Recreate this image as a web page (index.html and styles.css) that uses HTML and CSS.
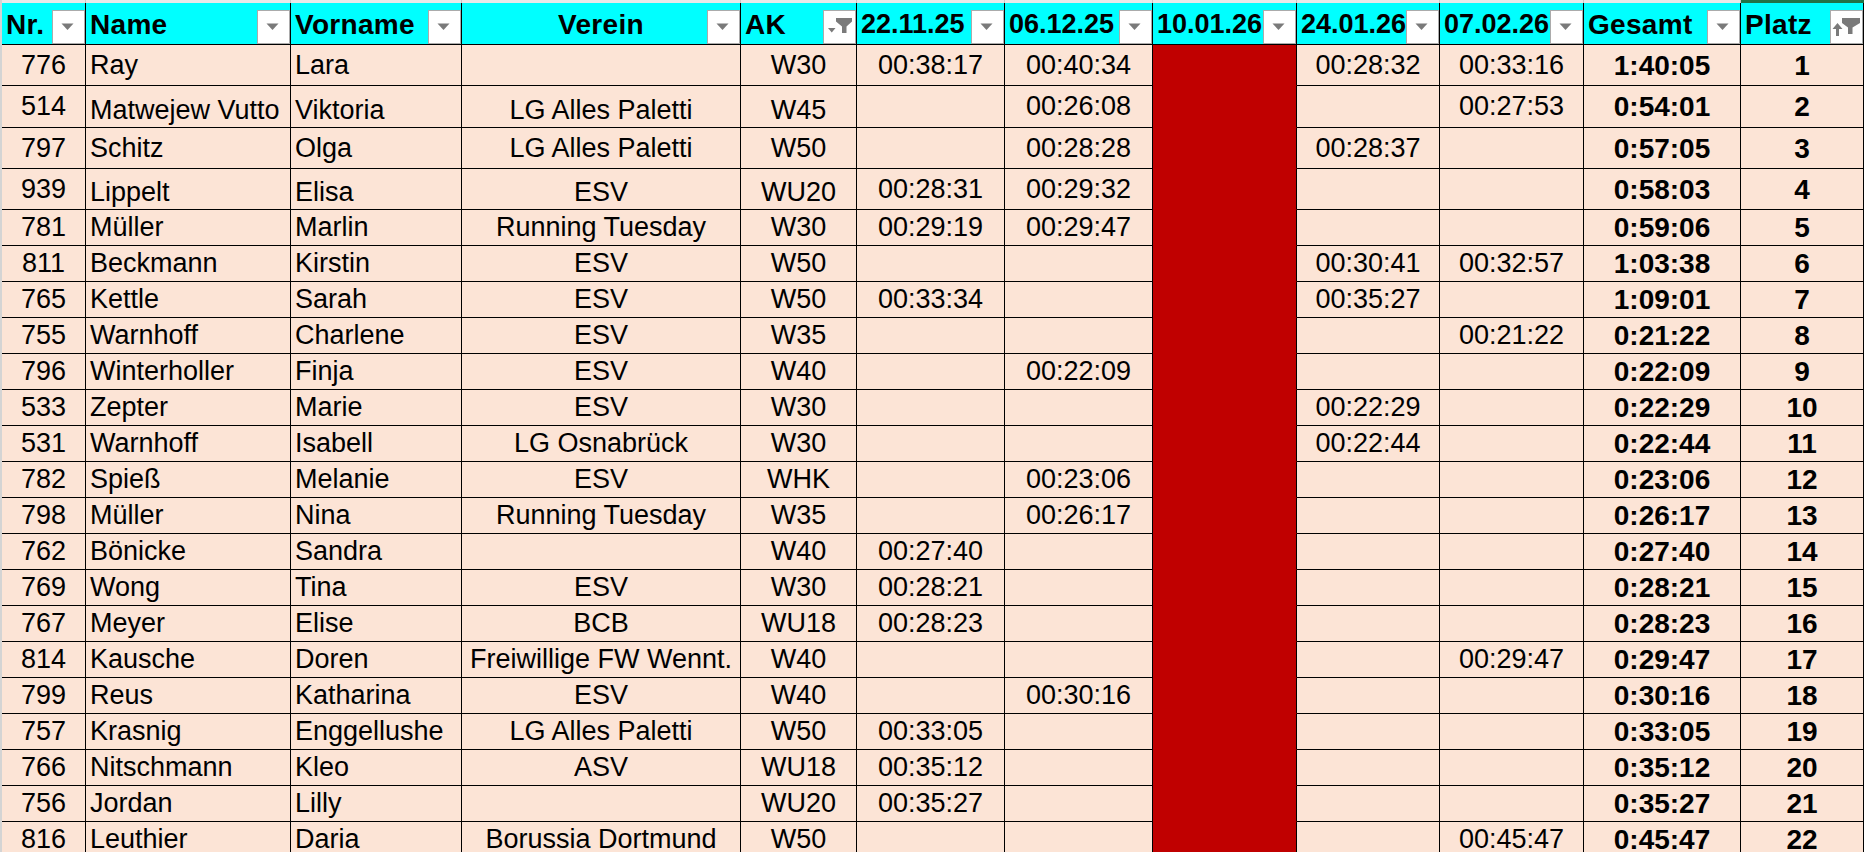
FILE: index.html
```html
<!DOCTYPE html>
<html lang="de">
<head>
<meta charset="utf-8">
<title>Ergebnisliste</title>
<link rel="stylesheet" href="styles.css">
</head>
<body>
<div class="sheet">
  <div class="row strip">
    <div class="sc"></div><div class="sc"></div><div class="sc"></div><div class="sc"></div><div class="sc"></div><div class="sc"></div><div class="sc"></div><div class="sc"></div><div class="sc"></div><div class="sc"></div><div class="sc"></div><div class="sc sel"></div>
  </div>
  <div class="row head">
    <div class="hd wide">Nr.<span class="fb"><svg viewBox="0 0 31 32"><polygon class="ic" points="8.5,12.5 20.5,12.5 14.5,19"/></svg></span></div>
    <div class="hd wide">Name<span class="fb"><svg viewBox="0 0 31 32"><polygon class="ic" points="8.5,12.5 20.5,12.5 14.5,19"/></svg></span></div>
    <div class="hd wide">Vorname<span class="fb"><svg viewBox="0 0 31 32"><polygon class="ic" points="8.5,12.5 20.5,12.5 14.5,19"/></svg></span></div>
    <div class="hd wide mid">Verein<span class="fb"><svg viewBox="0 0 31 32"><polygon class="ic" points="8.5,12.5 20.5,12.5 14.5,19"/></svg></span></div>
    <div class="hd wide">AK<span class="fb"><svg viewBox="0 0 31 32"><polygon class="ic" points="12,7 28,7 28,10.5 22.5,15.5 22.5,22 18,22 18,15.5 12,10.5"/><polygon class="ic" points="4,17 11.5,17 7.75,21.5"/></svg></span></div>
    <div class="hd">22.11.25<span class="fb"><svg viewBox="0 0 31 32"><polygon class="ic" points="8.5,12.5 20.5,12.5 14.5,19"/></svg></span></div>
    <div class="hd">06.12.25<span class="fb"><svg viewBox="0 0 31 32"><polygon class="ic" points="8.5,12.5 20.5,12.5 14.5,19"/></svg></span></div>
    <div class="hd">10.01.26<span class="fb"><svg viewBox="0 0 31 32"><polygon class="ic" points="8.5,12.5 20.5,12.5 14.5,19"/></svg></span></div>
    <div class="hd">24.01.26<span class="fb"><svg viewBox="0 0 31 32"><polygon class="ic" points="8.5,12.5 20.5,12.5 14.5,19"/></svg></span></div>
    <div class="hd">07.02.26<span class="fb"><svg viewBox="0 0 31 32"><polygon class="ic" points="8.5,12.5 20.5,12.5 14.5,19"/></svg></span></div>
    <div class="hd wide">Gesamt<span class="fb"><svg viewBox="0 0 31 32"><polygon class="ic" points="8.5,12.5 20.5,12.5 14.5,19"/></svg></span></div>
    <div class="hd wide">Platz<span class="fb"><svg viewBox="0 0 31 32"><polygon class="ic" points="1.5,18 6.5,12 11.5,18 8,18 8,25 5,25 5,18"/><polygon class="ic" points="11,7 29,7 29,12 21.5,16.5 21.5,23 17,23 17,16.5 11,12"/></svg></span></div>
  </div>

  <div class="row h41">
    <div class="c ctr">776</div><div class="c txt">Ray</div><div class="c txt">Lara</div><div class="c ctr"></div><div class="c ctr">W30</div><div class="c ctr">00:38:17</div><div class="c ctr">00:40:34</div><div class="c red"></div><div class="c ctr">00:28:32</div><div class="c ctr">00:33:16</div><div class="c ctr b">1:40:05</div><div class="c ctr b">1</div>
  </div>
  <div class="row h42">
    <div class="c ctr">514</div><div class="c txt vb">Matwejew Vutto</div><div class="c txt vb">Viktoria</div><div class="c ctr vb">LG Alles Paletti</div><div class="c ctr vb">W45</div><div class="c ctr"></div><div class="c ctr">00:26:08</div><div class="c red"></div><div class="c ctr"></div><div class="c ctr">00:27:53</div><div class="c ctr b">0:54:01</div><div class="c ctr b">2</div>
  </div>
  <div class="row h41">
    <div class="c ctr">797</div><div class="c txt">Schitz</div><div class="c txt">Olga</div><div class="c ctr">LG Alles Paletti</div><div class="c ctr">W50</div><div class="c ctr"></div><div class="c ctr">00:28:28</div><div class="c red"></div><div class="c ctr">00:28:37</div><div class="c ctr"></div><div class="c ctr b">0:57:05</div><div class="c ctr b">3</div>
  </div>
  <div class="row h41">
    <div class="c ctr">939</div><div class="c txt vb">Lippelt</div><div class="c txt vb">Elisa</div><div class="c ctr vb">ESV</div><div class="c ctr vb">WU20</div><div class="c ctr">00:28:31</div><div class="c ctr">00:29:32</div><div class="c red"></div><div class="c ctr"></div><div class="c ctr"></div><div class="c ctr b">0:58:03</div><div class="c ctr b">4</div>
  </div>
  <div class="row">
    <div class="c ctr">781</div><div class="c txt">Müller</div><div class="c txt">Marlin</div><div class="c ctr">Running Tuesday</div><div class="c ctr">W30</div><div class="c ctr">00:29:19</div><div class="c ctr">00:29:47</div><div class="c red"></div><div class="c ctr"></div><div class="c ctr"></div><div class="c ctr b">0:59:06</div><div class="c ctr b">5</div>
  </div>
  <div class="row">
    <div class="c ctr">811</div><div class="c txt">Beckmann</div><div class="c txt">Kirstin</div><div class="c ctr">ESV</div><div class="c ctr">W50</div><div class="c ctr"></div><div class="c ctr"></div><div class="c red"></div><div class="c ctr">00:30:41</div><div class="c ctr">00:32:57</div><div class="c ctr b">1:03:38</div><div class="c ctr b">6</div>
  </div>
  <div class="row">
    <div class="c ctr">765</div><div class="c txt">Kettle</div><div class="c txt">Sarah</div><div class="c ctr">ESV</div><div class="c ctr">W50</div><div class="c ctr">00:33:34</div><div class="c ctr"></div><div class="c red"></div><div class="c ctr">00:35:27</div><div class="c ctr"></div><div class="c ctr b">1:09:01</div><div class="c ctr b">7</div>
  </div>
  <div class="row">
    <div class="c ctr">755</div><div class="c txt">Warnhoff</div><div class="c txt">Charlene</div><div class="c ctr">ESV</div><div class="c ctr">W35</div><div class="c ctr"></div><div class="c ctr"></div><div class="c red"></div><div class="c ctr"></div><div class="c ctr">00:21:22</div><div class="c ctr b">0:21:22</div><div class="c ctr b">8</div>
  </div>
  <div class="row">
    <div class="c ctr">796</div><div class="c txt">Winterholler</div><div class="c txt">Finja</div><div class="c ctr">ESV</div><div class="c ctr">W40</div><div class="c ctr"></div><div class="c ctr">00:22:09</div><div class="c red"></div><div class="c ctr"></div><div class="c ctr"></div><div class="c ctr b">0:22:09</div><div class="c ctr b">9</div>
  </div>
  <div class="row">
    <div class="c ctr">533</div><div class="c txt">Zepter</div><div class="c txt">Marie</div><div class="c ctr">ESV</div><div class="c ctr">W30</div><div class="c ctr"></div><div class="c ctr"></div><div class="c red"></div><div class="c ctr">00:22:29</div><div class="c ctr"></div><div class="c ctr b">0:22:29</div><div class="c ctr b">10</div>
  </div>
  <div class="row">
    <div class="c ctr">531</div><div class="c txt">Warnhoff</div><div class="c txt">Isabell</div><div class="c ctr">LG Osnabrück</div><div class="c ctr">W30</div><div class="c ctr"></div><div class="c ctr"></div><div class="c red"></div><div class="c ctr">00:22:44</div><div class="c ctr"></div><div class="c ctr b">0:22:44</div><div class="c ctr b">11</div>
  </div>
  <div class="row">
    <div class="c ctr">782</div><div class="c txt">Spieß</div><div class="c txt">Melanie</div><div class="c ctr">ESV</div><div class="c ctr">WHK</div><div class="c ctr"></div><div class="c ctr">00:23:06</div><div class="c red"></div><div class="c ctr"></div><div class="c ctr"></div><div class="c ctr b">0:23:06</div><div class="c ctr b">12</div>
  </div>
  <div class="row">
    <div class="c ctr">798</div><div class="c txt">Müller</div><div class="c txt">Nina</div><div class="c ctr">Running Tuesday</div><div class="c ctr">W35</div><div class="c ctr"></div><div class="c ctr">00:26:17</div><div class="c red"></div><div class="c ctr"></div><div class="c ctr"></div><div class="c ctr b">0:26:17</div><div class="c ctr b">13</div>
  </div>
  <div class="row">
    <div class="c ctr">762</div><div class="c txt">Bönicke</div><div class="c txt">Sandra</div><div class="c ctr"></div><div class="c ctr">W40</div><div class="c ctr">00:27:40</div><div class="c ctr"></div><div class="c red"></div><div class="c ctr"></div><div class="c ctr"></div><div class="c ctr b">0:27:40</div><div class="c ctr b">14</div>
  </div>
  <div class="row">
    <div class="c ctr">769</div><div class="c txt">Wong</div><div class="c txt">Tina</div><div class="c ctr">ESV</div><div class="c ctr">W30</div><div class="c ctr">00:28:21</div><div class="c ctr"></div><div class="c red"></div><div class="c ctr"></div><div class="c ctr"></div><div class="c ctr b">0:28:21</div><div class="c ctr b">15</div>
  </div>
  <div class="row">
    <div class="c ctr">767</div><div class="c txt">Meyer</div><div class="c txt">Elise</div><div class="c ctr">BCB</div><div class="c ctr">WU18</div><div class="c ctr">00:28:23</div><div class="c ctr"></div><div class="c red"></div><div class="c ctr"></div><div class="c ctr"></div><div class="c ctr b">0:28:23</div><div class="c ctr b">16</div>
  </div>
  <div class="row">
    <div class="c ctr">814</div><div class="c txt">Kausche</div><div class="c txt">Doren</div><div class="c ctr">Freiwillige FW Wennt.</div><div class="c ctr">W40</div><div class="c ctr"></div><div class="c ctr"></div><div class="c red"></div><div class="c ctr"></div><div class="c ctr">00:29:47</div><div class="c ctr b">0:29:47</div><div class="c ctr b">17</div>
  </div>
  <div class="row">
    <div class="c ctr">799</div><div class="c txt">Reus</div><div class="c txt">Katharina</div><div class="c ctr">ESV</div><div class="c ctr">W40</div><div class="c ctr"></div><div class="c ctr">00:30:16</div><div class="c red"></div><div class="c ctr"></div><div class="c ctr"></div><div class="c ctr b">0:30:16</div><div class="c ctr b">18</div>
  </div>
  <div class="row">
    <div class="c ctr">757</div><div class="c txt">Krasnig</div><div class="c txt">Enggellushe</div><div class="c ctr">LG Alles Paletti</div><div class="c ctr">W50</div><div class="c ctr">00:33:05</div><div class="c ctr"></div><div class="c red"></div><div class="c ctr"></div><div class="c ctr"></div><div class="c ctr b">0:33:05</div><div class="c ctr b">19</div>
  </div>
  <div class="row">
    <div class="c ctr">766</div><div class="c txt">Nitschmann</div><div class="c txt">Kleo</div><div class="c ctr">ASV</div><div class="c ctr">WU18</div><div class="c ctr">00:35:12</div><div class="c ctr"></div><div class="c red"></div><div class="c ctr"></div><div class="c ctr"></div><div class="c ctr b">0:35:12</div><div class="c ctr b">20</div>
  </div>
  <div class="row">
    <div class="c ctr">756</div><div class="c txt">Jordan</div><div class="c txt">Lilly</div><div class="c ctr"></div><div class="c ctr">WU20</div><div class="c ctr">00:35:27</div><div class="c ctr"></div><div class="c red"></div><div class="c ctr"></div><div class="c ctr"></div><div class="c ctr b">0:35:27</div><div class="c ctr b">21</div>
  </div>
  <div class="row">
    <div class="c ctr">816</div><div class="c txt">Leuthier</div><div class="c txt">Daria</div><div class="c ctr">Borussia Dortmund</div><div class="c ctr">W50</div><div class="c ctr"></div><div class="c ctr"></div><div class="c red"></div><div class="c ctr"></div><div class="c ctr">00:45:47</div><div class="c ctr b">0:45:47</div><div class="c ctr b">22</div>
  </div>
</div>
</body>
</html>
```

FILE: styles.css
```css
html, body {
  margin: 0;
  padding: 0;
  background: #ffffff;
  overflow: hidden;
}

body {
  width: 1864px;
  height: 852px;
  font-family: "Liberation Sans", Arial, sans-serif;
  font-size: 27px;
  line-height: 31px;
  color: #000000;
}

.sheet {
  border-left: 2px solid #d4d4d4;
  height: 852px;
  box-sizing: border-box;
}

.row {
  display: grid;
  grid-template-columns: 84px 205px 171px 279px 116px 148px 148px 144px 143px 144px 157px 123px;
  height: 36px;
}

.row.strip { height: 3px; }
.row.head { height: 42px; }
.row.h41 { height: 41px; }
.row.h42 { height: 42px; }

.sc {
  background: #e9e9e9;
  border-right: 1px solid #c8c8c8;
  box-sizing: border-box;
}
.sc.sel {
  background: #217346;
  border-right: none;
}

.hd, .c {
  box-sizing: border-box;
  border-right: 1px solid #000000;
  border-bottom: 1px solid #000000;
  display: flex;
  align-items: center;
  white-space: nowrap;
  overflow: hidden;
}

.hd {
  position: relative;
  background: #00ffff;
  font-weight: 700;
  font-size: 27px;
  padding: 2px 0 0 4px;
  justify-content: flex-start;
}
.hd.wide {
  font-size: 28px;
  letter-spacing: 0.3px;
}
.hd.mid {
  justify-content: center;
  padding-left: 0;
}

.fb {
  position: absolute;
  right: 0;
  bottom: 0;
  width: 33px;
  height: 34px;
  box-sizing: border-box;
  background: #ffffff;
  border: 1px solid #ababab;
  display: flex;
}
.fb svg {
  width: 31px;
  height: 32px;
  display: block;
}
.ic { fill: #7a7a7a; }

.c {
  background: #fce4d6;
}
.c.txt {
  justify-content: flex-start;
  padding-left: 4px;
}
.c.ctr {
  justify-content: center;
}
.c.b {
  font-weight: 700;
  font-size: 28px;
}
.c.vb {
  align-items: flex-end;
  padding-bottom: 1px;
}
.c.red {
  background: #c00000;
  border-bottom-color: #c00000;
}
```
